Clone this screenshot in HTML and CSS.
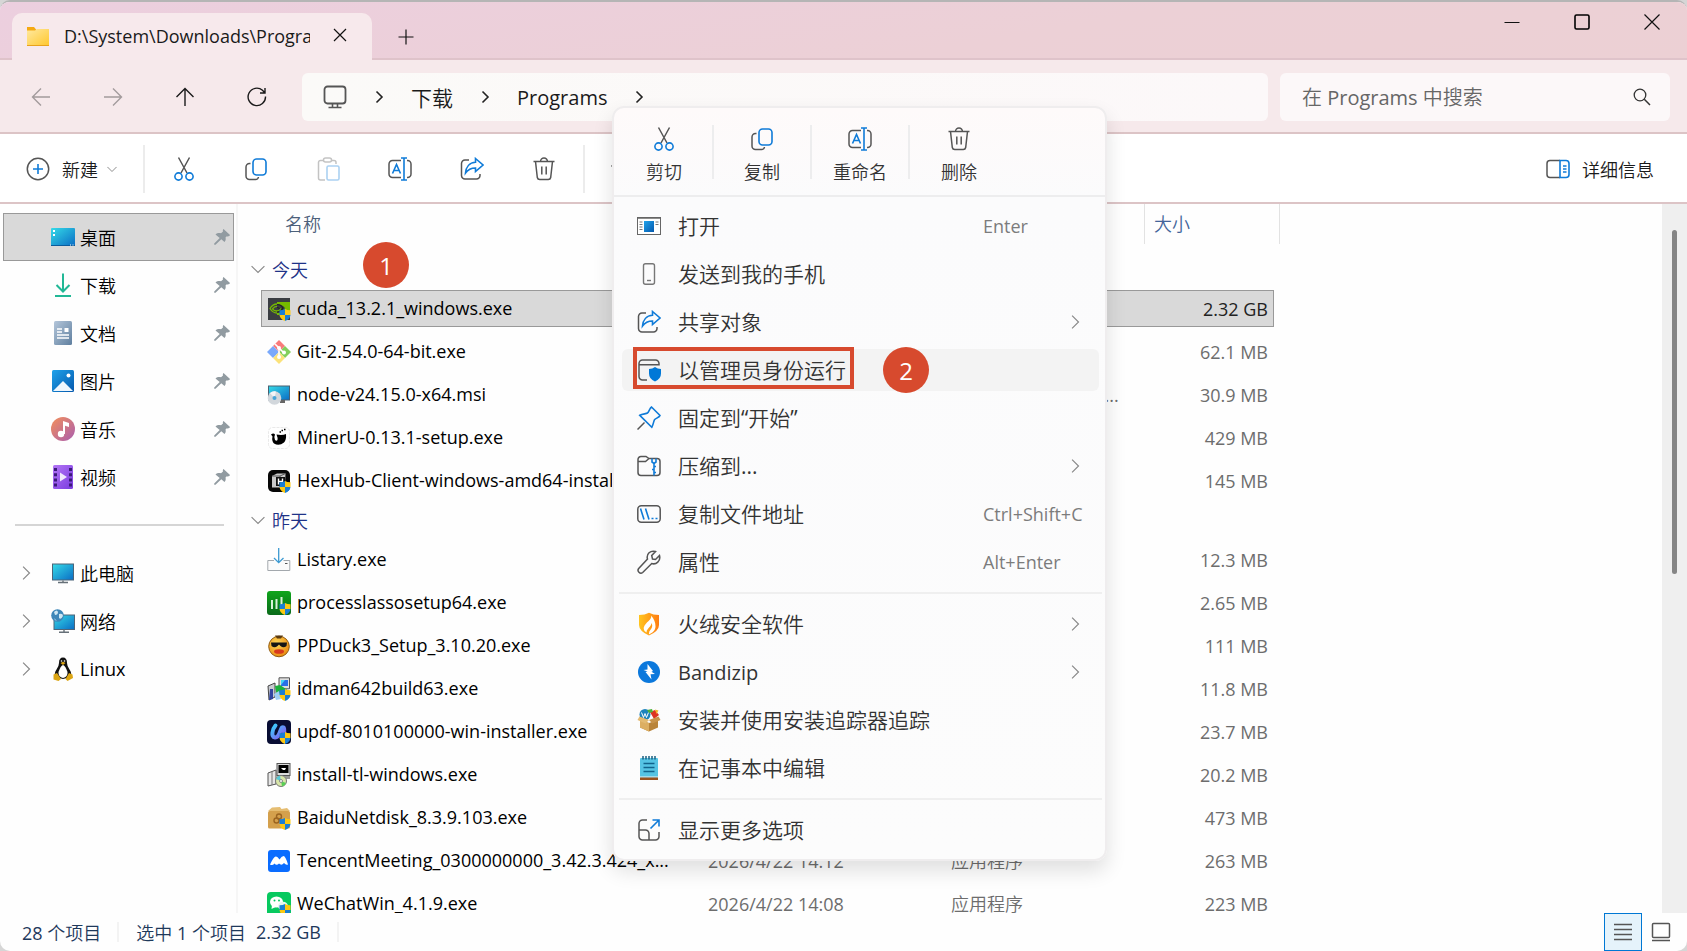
FILE: index.html
```html
<!DOCTYPE html>
<html lang="zh-CN">
<head>
    <meta charset="UTF-8">
    <meta name="viewport" content="width=device-width, initial-scale=1.0">
    <title>Programs</title>
    <link rel="stylesheet" href="styles.css">
</head>
<body>
    <svg class="sprite" width="0" height="0" aria-hidden="true">
        <defs>
            <linearGradient id="g-screen" x1="0" y1="0" x2="1" y2="1">
                <stop offset="0" stop-color="#35dbe8"/>
                <stop offset="1" stop-color="#0a6cc4"/>
            </linearGradient>
            <linearGradient id="g-folder" x1="0" y1="0" x2="1" y2="1">
                <stop offset="0" stop-color="#ffe9a0"/>
                <stop offset="1" stop-color="#ffc830"/>
            </linearGradient>
            <linearGradient id="g-doc" x1="0" y1="0" x2="1" y2="1">
                <stop offset="0" stop-color="#b4c6da"/>
                <stop offset="1" stop-color="#5f7f9f"/>
            </linearGradient>
            <linearGradient id="g-pic" x1="0" y1="0" x2="1" y2="1">
                <stop offset="0" stop-color="#1fa2ea"/>
                <stop offset="1" stop-color="#0558ad"/>
            </linearGradient>
            <linearGradient id="g-music" x1="0" y1="0" x2="1" y2="1">
                <stop offset="0" stop-color="#f4905a"/>
                <stop offset="1" stop-color="#a95db0"/>
            </linearGradient>
            <linearGradient id="g-video" x1="0" y1="0" x2="1" y2="1">
                <stop offset="0" stop-color="#b376f5"/>
                <stop offset="1" stop-color="#7a3be0"/>
            </linearGradient>
            <linearGradient id="g-lasso" x1="0" y1="0" x2="0" y2="1">
                <stop offset="0" stop-color="#0fa51c"/>
                <stop offset="1" stop-color="#0a6a1a"/>
            </linearGradient>
            <linearGradient id="g-fire" x1="0" y1="0" x2="1" y2="0">
                <stop offset="0" stop-color="#ffc51f"/>
                <stop offset="1" stop-color="#ff7d12"/>
            </linearGradient>
            <linearGradient id="g-updf" x1="0" y1="0" x2="1" y2="1">
                <stop offset="0" stop-color="#3ad0ff"/>
                <stop offset="1" stop-color="#8a54f0"/>
            </linearGradient>
            <radialGradient id="g-duck" cx="0.4" cy="0.35" r="0.7">
                <stop offset="0" stop-color="#ffd95a"/>
                <stop offset="1" stop-color="#e8860c"/>
            </radialGradient>
        </defs>

        <!-- line icons -->
        <symbol id="i-cut" viewBox="0 0 24 24">
            <path class="s-ink" d="M6.5 0.5 15 16M17.500 0.500 9 16"/>
            <circle class="s-blue" cx="6.500" cy="19.500" r="3.600"/>
            <circle class="s-blue" cx="17.500" cy="19.500" r="3.600"/>
        </symbol>
        <symbol id="i-copy" viewBox="0 0 24 24">
            <path class="s-ink" d="M6.500 6.500H5.500a3.500 3.500 0 0 0-3.500 3.500v9a3.500 3.500 0 0 0 3.500 3.500h6a3 3 0 0 0 3-2.500"/>
            <rect class="s-blue" x="9" y="2" width="13" height="16" rx="3.500"/>
        </symbol>
        <symbol id="i-paste" viewBox="0 0 24 24">
            <g opacity="0.35">
                <path class="s-ink" d="M7.500 3.500H4.500a2 2 0 0 0-2 2V21a2 2 0 0 0 2 2H9M15.500 3.500h2.500a2 2 0 0 1 2 2V7"/>
                <rect class="s-ink" x="7.500" y="1" width="8" height="4" rx="2"/>
                <rect class="s-blue" x="11" y="9" width="12" height="14" rx="1.500"/>
            </g>
        </symbol>
        <symbol id="i-rename" viewBox="0 0 24 24">
            <path class="s-ink" d="M13 3.500H4.500a3.500 3.500 0 0 0-3.500 3.500v10a3.500 3.500 0 0 0 3.500 3.500H13M19 3.500h.5A3.500 3.500 0 0 1 23 7v10a3.500 3.500 0 0 1-3.500 3.500H19"/>
            <path class="s-blue" d="M4.500 16.500 8.500 7.500l4 9M6 13.500h5M16 1v22M13 1h6M13 23h6"/>
        </symbol>
        <symbol id="i-share" viewBox="0 0 24 24">
            <path class="s-ink" d="M9 3H5A3.500 3.500 0 0 0 1.500 6.500v12A3.500 3.500 0 0 0 5 22h11.500a3.500 3.500 0 0 0 3.500-3.500V17"/>
            <path class="s-blue" d="M15.500 1.500 23 8l-7.500 6.500V11C11 11 8 12.500 5.500 16 6 10 9.500 5.500 15.500 5.200z"/>
        </symbol>
        <symbol id="i-delete" viewBox="0 0 24 24">
            <path class="s-ink" d="M1.500 4.500h21M8.500 4.500a3.500 3.500 0 0 1 7 0M3.500 4.500l1.800 16a2.500 2.500 0 0 0 2.500 2h8.400a2.500 2.500 0 0 0 2.500-2l1.800-16M9.800 9.500v8M14.200 9.500v8"/>
        </symbol>
        <symbol id="i-sort" viewBox="0 0 24 24">
            <path class="s-ink" d="M7 20V5M2.500 9.500 7 5l4.500 4.500M17 4v17M13 17l4 4 4-4"/>
        </symbol>
        <symbol id="i-new" viewBox="0 0 24 24">
            <circle class="s-ink" cx="12" cy="12" r="10.700"/>
            <path class="s-blue" d="M12 7v10M7 12h10"/>
        </symbol>
        <symbol id="i-details" viewBox="0 0 24 24">
            <path class="s-ink" d="M14 3.500H4a3 3 0 0 0-3 3v11a3 3 0 0 0 3 3h10"/>
            <path class="s-blue" d="M14 3.500h6a3 3 0 0 1 3 3v11a3 3 0 0 1-3 3h-6zM17 9h3.500M17 12h3.500M17 15h3.500"/>
        </symbol>
        <symbol id="i-chev" viewBox="0 0 12 12">
            <path d="M3.500 0.500 9 6l-5.500 5.500" fill="none" stroke="currentColor"/>
        </symbol>
        <symbol id="i-down" viewBox="0 0 12 12">
            <path d="M0.500 3.500 6 9l5.500-5.500" fill="none" stroke="currentColor"/>
        </symbol>
        <symbol id="i-pin" viewBox="0 0 16 16">
            <path fill="#919ba1" d="M9.500 0 16 6c-.8 1.500-2 1.600-3.200 1.200L11.500 8.500c.5 1.800.2 3.300-1 4.500L7.300 10.200 1.500 15.800.2 15.800V14.500L5.700 9 1.500 5.500C3 4 5 3.800 7 4.200L9 2.600C8.700 1.500 8.800.8 9.500 0z"/>
        </symbol>
        <symbol id="i-shield" viewBox="0 0 24 24">
            <path fill="#1a7fd4" d="M12.500 13.300Q16 13.300 18 12v6h-5.500zM18 18h5.500q-.5 4.200-5.500 6z"/>
            <path fill="#fcc812" d="M18 12q2 1.300 5.500 1.300V18H18zM12.500 18H18v6q-5-1.800-5.500-6z"/>
        </symbol>
        <symbol id="i-open" viewBox="0 0 24 24">
            <rect x="0.500" y="3.500" width="23" height="17" fill="#fff" stroke="#666"/>
            <path d="M0 4h24" stroke="#666" stroke-width="1.500"/>
            <rect x="7" y="7" width="10" height="11" fill="url(#g-pic)"/>
            <path d="M2.500 8h3M2.500 10.500h3M2.500 13h3M2.500 15.500h3M18.500 8h3M18.500 10.500h3" stroke="#777"/>
        </symbol>
        <symbol id="i-phone" viewBox="0 0 24 24">
            <rect x="6.500" y="1.800" width="11" height="20.400" rx="2" fill="none" stroke="#777" stroke-width="1.400"/>
            <path d="M10 18.500h4" stroke="#777" stroke-width="1.400"/>
        </symbol>
        <symbol id="i-admin" viewBox="0 0 24 24">
            <path class="s-ink" d="M10 22H5.500A3.500 3.500 0 0 1 2 18.500v-13A3.500 3.500 0 0 1 5.500 2h13A3.500 3.500 0 0 1 22 5.500V7.500M2 6.800h20"/>
            <path fill="#0078d7" d="M18 9q2.500 2 6 2v4.500q0 5.500-6 8-6-2.500-6-8V11q3.500 0 6-2z"/>
        </symbol>
        <symbol id="i-pinstart" viewBox="0 0 24 24">
            <path class="s-ink" d="M7.500 16.500 0.500 23.500"/>
            <path class="s-blue" d="M14.500 1 23 9.500c-.3 1.500-4.500 3-5.500 4.200-.8 1-1 4.800-2.700 7.500L2.800 9.300C5.500 7.700 9 8 10.500 7c1.500-1.200 2.500-5.500 4-6z"/>
        </symbol>
        <symbol id="i-zip" viewBox="0 0 24 24">
            <path class="s-ink" d="M1 7V5.500A3 3 0 0 1 4 2.500h5L12 4.500h8a3 3 0 0 1 3 3v11a3 3 0 0 1-3 3H4a3 3 0 0 1-3-3zM1 7.500h7.500L12 4.500"/>
            <path class="s-blue" d="M15 4.500v3.500l2 1.500 2-1.500V4.500M17 9.500v12M17 12.500h2M15 15.500h2M17 18.500h2"/>
        </symbol>
        <symbol id="i-path" viewBox="0 0 24 24">
            <rect class="s-ink" x="0.800" y="3.800" width="22.400" height="16.400" rx="3.500"/>
            <path class="s-blue" d="M3.500 6.500l3.500 11M8.500 6.500l3.500 11M14.500 16.500h2M18.500 16.500h2"/>
        </symbol>
        <symbol id="i-wrench" viewBox="0 0 24 24">
            <path class="s-ink" d="M18.500 1.500c-5-1.500-9.500 2.500-8 7.500L1.700 18.500c-2 2.500 1.300 6 4 4l9-9C19 15 24 11 22.500 5.500L18.500 9.500l-3-.5-.8-3.500z"/>
        </symbol>
        <symbol id="i-more" viewBox="0 0 24 24">
            <path class="s-ink" d="M10 2H5.500A3.500 3.500 0 0 0 2 5.500v13A3.500 3.500 0 0 0 5.500 22h13a3.500 3.500 0 0 0 3.500-3.500V14M2 12h6.500a3.500 3.500 0 0 1 3.500 3.500V22"/>
            <path class="s-blue" d="M13.500 10.500 22 2M15.500 2H22v6.500"/>
        </symbol>

        <!-- program icons -->
        <symbol id="i-huorong" viewBox="0 0 24 24">
            <path fill="url(#g-fire)" d="M2 3Q8 3 12 .8 16 3 22 3v10q0 6-10 10.500Q2 19 2 13z"/>
            <path fill="#fff" d="M14 3.500c1 3-2 5-4.500 7.500-3 3-3.500 5.500-2 8l2 1.500c0-3 2-4 3.500-6 1-1.200 1.500-2.400 1.300-3.500 2.200 3 0 6-2 8.500l-.5 3c4-1.500 6.700-4.500 6.700-8C18.500 10 17 7 14 3.500z"/>
        </symbol>
        <symbol id="i-bandizip" viewBox="0 0 24 24">
            <circle cx="12" cy="12" r="11" fill="#0b78dc"/>
            <path fill="#fff" d="M10.500 4 16 11l-1.500.8L18 14l-4.500.3 1 5.200-6-7.500 2-.5L6.500 10l4-.5z"/>
        </symbol>
        <symbol id="i-box" viewBox="0 0 24 24">
            <circle cx="8" cy="6.500" r="5.500" fill="#1d83bd"/>
            <path d="M4.500 4.500l2 5 1.500-4 1.500 4 2-5" fill="none" stroke="#fff"/>
            <path fill="#dd3322" d="M13 4l5-2 4 5-5 4z"/>
            <path fill="#4db13c" d="M10 2 15 1l1 3-4 1z"/>
            <path fill="#f5b32a" d="M18 1.500l3.500 1-2 3.500z"/>
            <path fill="#b9843a" d="M3 12l9 3 9-3v7.500l-9 4-9-4z"/>
            <path fill="#dcae62" d="M3 12l9 3v8.500l-9-4z"/>
            <path fill="#e3ba72" d="M2.500 8.500 0.500 12l8 3.500L12 12z"/>
            <path fill="#c8934a" d="M21.500 8.500l2 3.500-8 3.500L12 12z"/>
        </symbol>
        <symbol id="i-notepad" viewBox="0 0 24 24">
            <rect x="3" y="2" width="18" height="20" rx="1" fill="#56c4e4"/>
            <path d="M3 20.500h18v1H3z" fill="#f1f1f1"/>
            <path d="M3 21.500h18V24H3z" fill="#9a5320"/>
            <path d="M6 0v3.500M9 0v3.500M12 0v3.500M15 0v3.500M18 0v3.500" stroke="#1a5f80" stroke-width="1.500"/>
            <path d="M6.500 7.500h11M6.500 11.500h11M6.500 15.500h11" stroke="#12648c" stroke-width="1.600"/>
        </symbol>
        <symbol id="i-nvidia" viewBox="0 0 24 24">
            <rect x="1" y="1" width="22" height="22" fill="#3a3d42"/>
            <path fill="#76b900" d="M10 5h13v13H10v-2c4 0 6-2 8-5-2-2.500-5-4-8-4z"/>
            <path fill="none" stroke="#76b900" stroke-width="1.300" d="M10 7c-3 0-5.500 2-7 4.500C4.500 14 7 16 10 16M10 9.300c-2 0-3.500 1-4.500 2.500 1 1.500 2.500 2.300 4.500 2.200 2 0 3-1 4-2.500"/>
            <path fill="none" stroke="#222" stroke-width="1.200" d="M10 7.500c3 0 5 1.500 6 3.500-1.500 2.500-3.500 4-6 4M10 10.500q2 0 2.500 1.500"/>
            <use href="#i-shield"/>
        </symbol>
        <symbol id="i-git" viewBox="0 0 24 24">
            <path fill="#f97b7b" d="M12 0l6 6-6 6-6-6z"/>
            <path fill="#7aa9fb" d="M6 6l6 6-6 6-6-6z"/>
            <path fill="#82cf5c" d="M18 6l6 6-6 6-6-6z"/>
            <path fill="#fbe27a" d="M12 12l6 6-6 6-6-6z"/>
            <path d="M8 4l4 4v10M12 8l5 5" stroke="#fff" stroke-width="1.600" fill="none"/>
            <circle cx="12" cy="8" r="2" fill="#fff"/>
            <circle cx="12" cy="17" r="2" fill="#fff"/>
            <circle cx="17" cy="12.500" r="2" fill="#fff"/>
        </symbol>
        <symbol id="i-msi" viewBox="0 0 24 24">
            <rect x="1.500" y="3" width="21" height="14" fill="url(#g-screen)" stroke="#4a6070"/>
            <path d="M13 17v3h5v-3" fill="#666"/>
            <circle cx="7.500" cy="15" r="6.800" fill="#d2d7dc"/>
            <path d="M7.500 15 3 9.900A6.800 6.800 0 0 1 9 8.400z" fill="#f3f5f7"/>
            <circle cx="7.500" cy="15" r="2" fill="#4aa5d8"/>
        </symbol>
        <symbol id="i-mineru" viewBox="0 0 24 24">
            <rect x="1.500" y="1.500" width="21" height="21" rx="4" fill="#fff" stroke="#e9e9e9" stroke-dasharray="3 1"/>
            <path d="M4 8.500q2.500-2 4 0-1.500 3 0 5.500 1.500 1.500 2.500 0 .5-2-1-5.500 6 1 9.500-.5.500 6-2 8.500Q12 20.500 7 17.500 4.500 15 5.500 10.500z" fill="#000"/>
            <path d="M12.500 6h1.500M14.500 4.500h1.500M17 3.500h1.500" stroke="#000" stroke-width="1.500"/>
        </symbol>
        <symbol id="i-hexhub" viewBox="0 0 24 24">
            <rect x="1" y="1" width="22" height="22" rx="5" fill="#070707"/>
            <path d="M5 7l5-2.500h8.500L18 16l-5 2.500H5z" fill="#c9c9c9"/>
            <path d="M5 7h8v11M13 7l5.500-2.500" stroke="#555" fill="none"/>
            <rect x="9" y="8" width="9" height="9" fill="#111"/>
            <path d="M11.500 9.500v6M15.500 9.500v6M11.500 12.500h4" stroke="#fff" stroke-width="1.400"/>
            <use href="#i-shield"/>
        </symbol>
        <symbol id="i-listary" viewBox="0 0 24 24">
            <path d="M7 12.500H.8v10h22v-10H16.500" fill="#fbfbfb" stroke="#a3a8ad"/>
            <path d="M18 15.500h2.500" stroke="#555"/>
            <path d="M11.700 0v14.500M7 10l4.700 4.700L16.500 10" stroke="#3d9ad2" stroke-width="1.300" fill="none"/>
        </symbol>
        <symbol id="i-lasso" viewBox="0 0 24 24">
            <rect width="24" height="24" rx="3" fill="url(#g-lasso)"/>
            <path d="M5 9v9M9.500 8v10M14.500 6v12" stroke="#d9f2d9" stroke-width="2"/>
            <use href="#i-shield"/>
        </symbol>
        <symbol id="i-duck" viewBox="0 0 24 24">
            <circle cx="12" cy="12.500" r="10.300" fill="url(#g-duck)" stroke="#8f5a10"/>
            <path d="M8 1.500h8l-2 3H10z" fill="#5a3a10"/>
            <path d="M4 8.500h16l-.5 3.500q-3 2.500-6 0L12 10.500 10.500 12q-3 2.500-6 0z" fill="#151515"/>
            <ellipse cx="12" cy="17.500" rx="5" ry="2.300" fill="#d8391c"/>
        </symbol>
        <symbol id="i-idman" viewBox="0 0 24 24">
            <path fill="#dedede" stroke="#555" d="M12 .8h10.500v11H12z"/>
            <path fill="#2a6fe6" d="M14 3h7v6h-7z"/>
            <path fill="#42d7f2" d="M14 3h4l-4 5z"/>
            <path fill="#c9cbd0" stroke="#444" d="M1 9l7-3v14l-6 3z"/>
            <path fill="#31459f" d="M3 12h3v10l-4 1z"/>
            <path fill="#1bb13b" d="M8 9l5-1 9 6-8 1-4 5z"/>
            <path fill="#9fd0f5" d="M7 17l5-3 2 8-5 1z"/>
            <use href="#i-shield"/>
        </symbol>
        <symbol id="i-updf" viewBox="0 0 24 24">
            <rect width="24" height="24" rx="4" fill="#080d33"/>
            <path d="M8.500 5.500C5.500 9 3.500 17 8 17.500c4.500.5 5-8 7-10 2.500-1.500 2.500 3 2 7" fill="none" stroke="url(#g-updf)" stroke-width="4" stroke-linecap="round"/>
            <use href="#i-shield"/>
        </symbol>
        <symbol id="i-texlive" viewBox="0 0 24 24">
            <rect x="10" y=".5" width="13" height="12" fill="#dcdcdc" stroke="#555"/>
            <rect x="11.500" y="2" width="10" height="8" fill="#000"/>
            <path d="M14 5h5l-1 2h-2z" fill="#fff"/>
            <path d="M1 10l8-3v14l-8 2z" fill="#e6e6e6" stroke="#555"/>
            <path d="M5 9v13" stroke="#777"/>
            <path d="M17 13h6v3h-4z" fill="#999"/>
            <circle cx="14" cy="18" r="5.500" fill="#d8e6a8" stroke="#777"/>
            <path d="M14 18l-5-2a5.500 5.500 0 0 1 4-3.500z" fill="#55c8d8"/>
            <path d="M14 18l5 2a5.500 5.500 0 0 1-4 3.500z" fill="#59cf55"/>
            <circle cx="14" cy="18" r="1.500" fill="#fff" stroke="#888"/>
        </symbol>
        <symbol id="i-baidu" viewBox="0 0 24 24">
            <path fill="#e5bd72" d="M1 5l4-3.500L13 1l1.500 2L20 2l3 3z"/>
            <rect x="1" y="5" width="22" height="17.500" rx="1.500" fill="#d4a04c"/>
            <circle cx="12" cy="10.500" r="2.500" fill="none" stroke="#9b6420" stroke-width="1.400"/>
            <circle cx="9.500" cy="14.500" r="2.500" fill="none" stroke="#9b6420" stroke-width="1.400"/>
            <path d="M11.500 13l3 3.500" stroke="#9b6420" stroke-width="1.400"/>
            <use href="#i-shield"/>
        </symbol>
        <symbol id="i-tencent" viewBox="0 0 24 24">
            <rect x="1" y="1" width="22" height="22" rx="3" fill="#0a6cff"/>
            <path d="M3 15.500q4-8.500 6-8 1.500 0 3.500 3 2-3.500 4-3.500 2 0 4.500 8.500-2 1-4-1.500-2.500 3-5 .5-2.500 2.500-4.500 0-2 2.500-4.500 1z" fill="#fff"/>
        </symbol>
        <symbol id="i-wechat" viewBox="0 0 24 24">
            <rect width="24" height="24" rx="4" fill="#07c95f"/>
            <ellipse cx="9.500" cy="10" rx="6.500" ry="5.500" fill="#fff"/>
            <path d="M5 13l-.5 4 4-2z" fill="#fff"/>
            <ellipse cx="16" cy="14" rx="5" ry="4.300" fill="#e6f7ec"/>
            <circle cx="7.500" cy="8.500" r="1" fill="#07c95f"/>
            <circle cx="12" cy="8.500" r="1" fill="#07c95f"/>
            <use href="#i-shield"/>
        </symbol>
    </svg>

    <div class="window">
        <header class="titlebar">
            <div class="tab">
                <svg class="icon" viewBox="0 0 24 24">
                    <path fill="#f5a912" d="M1 3h7l2 2.500V8H1z"/>
                    <path fill="url(#g-folder)" d="M1 6.500h8l2-1.500h12v16H1z"/>
                    <path stroke="#e8a21c" d="M1 21.500h22"/>
                </svg>
                <span class="tab-title">D:\System\Downloads\Programs</span>
                <button class="tab-close" aria-label="关闭标签页">
                    <svg width="14" height="14" viewBox="0 0 14 14"><path class="s-black" d="M1 1l12 12M13 1 1 13"/></svg>
                </button>
            </div>
            <button class="tab-add" aria-label="新标签页">
                <svg width="16" height="16" viewBox="0 0 16 16"><path class="s-black" d="M8 .5v15M.5 8h15"/></svg>
            </button>
            <div class="window-controls">
                <button aria-label="最小化"><svg width="16" height="16" viewBox="0 0 16 16"><path class="s-black" d="M.5 8.500h15"/></svg></button>
                <button aria-label="最大化"><svg width="16" height="16" viewBox="0 0 16 16"><rect x="1" y="1" width="14" height="14" rx="1.500" fill="none" stroke="#000" stroke-width="1.600"/></svg></button>
                <button aria-label="关闭"><svg width="16" height="16" viewBox="0 0 16 16"><path class="s-black" d="M.5.5l15 15M15.500.5l-15 15"/></svg></button>
            </div>
        </header>

        <nav class="navbar">
            <button class="nav-btn" aria-label="后退" disabled><svg class="nav-icon" viewBox="0 0 20 20"><path d="M19 10H1.500M10 1.500 1.500 10l8.500 8.500"/></svg></button>
            <button class="nav-btn" aria-label="前进" disabled><svg class="nav-icon" viewBox="0 0 20 20"><path d="M1 10h17.500M10 1.500l8.500 8.500-8.500 8.500"/></svg></button>
            <button class="nav-btn" aria-label="向上"><svg class="nav-icon" viewBox="0 0 20 20"><path d="M10 19V1.500M1.500 10 10 1.500l8.500 8.500"/></svg></button>
            <button class="nav-btn" aria-label="刷新"><svg class="nav-icon" viewBox="0 0 20 20"><path d="M18.500 9.500a8.700 8.700 0 1 1-3-6.200l2 2.200M18 1v5h-5"/></svg></button>
            <div class="address">
                <svg class="icon" viewBox="0 0 24 24">
                    <rect x="1.500" y="1.500" width="21" height="17" rx="3" fill="none" stroke="#555" stroke-width="1.800"/>
                    <path d="M5.500 22.500h13M9.500 18.500v4M14.500 18.500v4" stroke="#555" stroke-width="1.600"/>
                </svg>
                <svg class="crumb-chev" viewBox="0 0 24 24"><path d="M9.500 6.500 15 12l-5.500 5.500"/></svg>
                <a class="crumb-zh" href="#downloads">下载</a>
                <svg class="crumb-chev" viewBox="0 0 24 24"><path d="M9.500 6.500 15 12l-5.500 5.500"/></svg>
                <a href="#programs">Programs</a>
                <svg class="crumb-chev" viewBox="0 0 24 24"><path d="M9.500 6.500 15 12l-5.500 5.500"/></svg>
            </div>
            <div class="search">
                <input type="text" aria-label="搜索" placeholder="在 Programs 中搜索">
                <svg width="18" height="18" viewBox="0 0 18 18"><circle cx="7" cy="7" r="5.800" fill="none" stroke="#333" stroke-width="1.300"/><path d="M11.300 11.300l5.700 5.700" stroke="#333" stroke-width="1.500"/></svg>
            </div>
        </nav>

        <div class="commandbar">
            <button class="cmd-new">
                <svg class="icon"><use href="#i-new"/></svg>
                <span>新建</span>
                <svg class="tiny"><use href="#i-down"/></svg>
            </button>
            <span class="cmd-sep"></span>
            <button class="cmd-btn" aria-label="剪切"><svg class="icon"><use href="#i-cut"/></svg></button>
            <button class="cmd-btn" aria-label="复制"><svg class="icon"><use href="#i-copy"/></svg></button>
            <button class="cmd-btn" aria-label="粘贴" disabled><svg class="icon"><use href="#i-paste"/></svg></button>
            <button class="cmd-btn" aria-label="重命名"><svg class="icon"><use href="#i-rename"/></svg></button>
            <button class="cmd-btn" aria-label="共享"><svg class="icon"><use href="#i-share"/></svg></button>
            <button class="cmd-btn" aria-label="删除"><svg class="icon"><use href="#i-delete"/></svg></button>
            <span class="cmd-sep"></span>
            <button class="cmd-sort" aria-label="排序"><svg class="icon"><use href="#i-sort"/></svg></button>
            <button class="cmd-details">
                <svg class="icon"><use href="#i-details"/></svg>
                <span>详细信息</span>
            </button>
        </div>

        <div class="body">
            <aside class="sidebar">
                <a class="side-item selected" href="#desktop">
                    <svg class="icon" viewBox="0 0 24 24"><rect y="3" width="24" height="18" rx="1" fill="url(#g-screen)"/><path d="M2 6h2M2 10h2" stroke="#fff" stroke-width="2"/><path d="M0 20.500h24" stroke="#0a5c9c"/><path d="M19 20h1M21.500 20h1" stroke="#fff"/></svg>
                    <span>桌面</span><svg class="pin"><use href="#i-pin"/></svg>
                </a>
                <a class="side-item" href="#downloads">
                    <svg class="icon" viewBox="0 0 24 24"><path d="M12 .5v18M5.500 12l6.500 6.500 6.500-6.500M4 23h16" fill="none" stroke="#21b896" stroke-width="2"/></svg>
                    <span>下载</span><svg class="pin"><use href="#i-pin"/></svg>
                </a>
                <a class="side-item" href="#documents">
                    <svg class="icon" viewBox="0 0 24 24"><rect x="3" width="18" height="24" rx="1.500" fill="url(#g-doc)"/><path d="M6 8h5M6 11h5M6 14h12M6 17h12" stroke="#fff" stroke-width="1.300"/><rect x="13.500" y="7" width="4" height="4" fill="#fff"/></svg>
                    <span>文档</span><svg class="pin"><use href="#i-pin"/></svg>
                </a>
                <a class="side-item" href="#pictures">
                    <svg class="icon" viewBox="0 0 24 24"><rect x="1" y="1" width="22" height="22" rx="1.500" fill="url(#g-pic)"/><path d="M2 22 12 12l10 10z" fill="#eef6fd"/><circle cx="17.500" cy="6.500" r="2" fill="#fff"/></svg>
                    <span>图片</span><svg class="pin"><use href="#i-pin"/></svg>
                </a>
                <a class="side-item" href="#music">
                    <svg class="icon" viewBox="0 0 24 24"><circle cx="12" cy="12" r="12" fill="url(#g-music)"/><circle cx="10" cy="17" r="3.200" fill="#fff"/><path d="M12 4l6 2v4l-4-1.200V17H12z" fill="#fff"/></svg>
                    <span>音乐</span><svg class="pin"><use href="#i-pin"/></svg>
                </a>
                <a class="side-item" href="#videos">
                    <svg class="icon" viewBox="0 0 24 24"><rect x="2" width="20" height="24" rx="1.500" fill="url(#g-video)"/><path d="M4.500 3v19M19.500 3v19" stroke="#3b1a7a" stroke-width="3" stroke-dasharray="3 2.200"/><path d="M9 7.500l7 4.500-7 4.500z" fill="#f0e8fc"/></svg>
                    <span>视频</span><svg class="pin"><use href="#i-pin"/></svg>
                </a>
                <hr class="side-rule">
                <a class="side-item" href="#computer">
                    <svg class="side-chev"><use href="#i-chev"/></svg>
                    <svg class="icon" viewBox="0 0 24 24"><rect x="1.500" y="3" width="21" height="16" fill="url(#g-screen)" stroke="#4c6478"/><path d="M12 19.500v2M7 21.500h10" stroke="#667078" stroke-width="1.400"/></svg>
                    <span>此电脑</span>
                </a>
                <a class="side-item" href="#network">
                    <svg class="side-chev"><use href="#i-chev"/></svg>
                    <svg class="icon" viewBox="0 0 24 24"><rect x="3" y="6" width="20.500" height="14.500" fill="url(#g-screen)" stroke="#4c6478"/><path d="M13 20.500v2.500M8 23.200h10" stroke="#667078" stroke-width="1.400"/><circle cx="6.500" cy="6.500" r="6.300" fill="#3d86b8"/><path d="M3 3q3-3 4 0 0 3-3 3zM8 5q4-1 4 2-2 4-4 2zM3 9l3 3-2-1z" fill="#cde6f2"/></svg>
                    <span>网络</span>
                </a>
                <a class="side-item" href="#linux">
                    <svg class="side-chev"><use href="#i-chev"/></svg>
                    <svg class="icon" viewBox="0 0 24 24"><path d="M8 6q0-5.500 4-5.500T16 6q0 3 2.500 6.500T20 20l-8 2-8-2q-1-4 1.500-7.500T8 6z" fill="#111"/><path d="M12 8q2.500 1 4.500 7 .5 5-4.500 6-5-1-4.500-6Q9.500 9 12 8z" fill="#fff"/><path d="M9.500 6 12 4.800 14.500 6 12 8zM2.500 17.500 6 16l4 6-2.500 2-5-1.500zM21.500 17.500 18 16l-3.500 6 2 2 5.500-3z" fill="#dba514"/><circle cx="10.500" cy="4" r=".8" fill="#fff"/><circle cx="13.500" cy="4" r=".8" fill="#fff"/></svg>
                    <span>Linux</span>
                </a>
            </aside>

            <main class="files">
                <table class="file-table">
                    <colgroup>
                        <col class="c-gutter"><col class="c-name"><col class="c-date"><col class="c-type"><col class="c-size"><col class="c-tail">
                    </colgroup>
                    <thead>
                        <tr>
                            <th></th>
                            <th><div class="head head-name">名称</div></th>
                            <th><div class="head"></div></th>
                            <th><div class="head"></div></th>
                            <th colspan="2"><div class="head head-last">大小</div></th>
                        </tr>
                    </thead>
                    <tbody>
                        <tr class="group"><th colspan="6"><div class="group-label"><svg class="group-chev"><use href="#i-down"/></svg>今天<span class="callout callout-one">1</span></div></th></tr>
                        <tr class="selected"><td></td><td><div class="cell name"><svg class="icon"><use href="#i-nvidia"/></svg><span>cuda_13.2.1_windows.exe</span></div></td><td><div class="cell"></div></td><td><div class="cell type"></div></td><td><div class="cell size">2.32 GB</div></td><td></td></tr>
                        <tr><td></td><td><div class="cell name"><svg class="icon"><use href="#i-git"/></svg><span>Git-2.54.0-64-bit.exe</span></div></td><td><div class="cell"></div></td><td><div class="cell type"></div></td><td><div class="cell size">62.1 MB</div></td><td></td></tr>
                        <tr><td></td><td><div class="cell name"><svg class="icon"><use href="#i-msi"/></svg><span>node-v24.15.0-x64.msi</span></div></td><td><div class="cell"></div></td><td><div class="cell type">Windows Installer ...</div></td><td><div class="cell size">30.9 MB</div></td><td></td></tr>
                        <tr><td></td><td><div class="cell name"><svg class="icon"><use href="#i-mineru"/></svg><span>MinerU-0.13.1-setup.exe</span></div></td><td><div class="cell"></div></td><td><div class="cell type"></div></td><td><div class="cell size">429 MB</div></td><td></td></tr>
                        <tr><td></td><td><div class="cell name"><svg class="icon"><use href="#i-hexhub"/></svg><span>HexHub-Client-windows-amd64-installer.exe</span></div></td><td><div class="cell"></div></td><td><div class="cell type"></div></td><td><div class="cell size">145 MB</div></td><td></td></tr>
                    </tbody>
                    <tbody>
                        <tr class="group"><th colspan="6"><div class="group-label"><svg class="group-chev"><use href="#i-down"/></svg>昨天</div></th></tr>
                        <tr><td></td><td><div class="cell name"><svg class="icon"><use href="#i-listary"/></svg><span>Listary.exe</span></div></td><td><div class="cell"></div></td><td><div class="cell type"></div></td><td><div class="cell size">12.3 MB</div></td><td></td></tr>
                        <tr><td></td><td><div class="cell name"><svg class="icon"><use href="#i-lasso"/></svg><span>processlassosetup64.exe</span></div></td><td><div class="cell"></div></td><td><div class="cell type"></div></td><td><div class="cell size">2.65 MB</div></td><td></td></tr>
                        <tr><td></td><td><div class="cell name"><svg class="icon"><use href="#i-duck"/></svg><span>PPDuck3_Setup_3.10.20.exe</span></div></td><td><div class="cell"></div></td><td><div class="cell type"></div></td><td><div class="cell size">111 MB</div></td><td></td></tr>
                        <tr><td></td><td><div class="cell name"><svg class="icon"><use href="#i-idman"/></svg><span>idman642build63.exe</span></div></td><td><div class="cell"></div></td><td><div class="cell type"></div></td><td><div class="cell size">11.8 MB</div></td><td></td></tr>
                        <tr><td></td><td><div class="cell name"><svg class="icon"><use href="#i-updf"/></svg><span>updf-8010100000-win-installer.exe</span></div></td><td><div class="cell"></div></td><td><div class="cell type"></div></td><td><div class="cell size">23.7 MB</div></td><td></td></tr>
                        <tr><td></td><td><div class="cell name"><svg class="icon"><use href="#i-texlive"/></svg><span>install-tl-windows.exe</span></div></td><td><div class="cell"></div></td><td><div class="cell type"></div></td><td><div class="cell size">20.2 MB</div></td><td></td></tr>
                        <tr><td></td><td><div class="cell name"><svg class="icon"><use href="#i-baidu"/></svg><span>BaiduNetdisk_8.3.9.103.exe</span></div></td><td><div class="cell"></div></td><td><div class="cell type"></div></td><td><div class="cell size">473 MB</div></td><td></td></tr>
                        <tr><td></td><td><div class="cell name"><svg class="icon"><use href="#i-tencent"/></svg><span>TencentMeeting_0300000000_3.42.3.424_x...</span></div></td><td><div class="cell">2026/4/22 14:12</div></td><td><div class="cell type">应用程序</div></td><td><div class="cell size">263 MB</div></td><td></td></tr>
                        <tr><td></td><td><div class="cell name"><svg class="icon"><use href="#i-wechat"/></svg><span>WeChatWin_4.1.9.exe</span></div></td><td><div class="cell">2026/4/22 14:08</div></td><td><div class="cell type">应用程序</div></td><td><div class="cell size">223 MB</div></td><td></td></tr>
                    </tbody>
                </table>
            </main>
            <div class="scrollbar"><div class="thumb"></div></div>
        </div>

        <footer class="statusbar">
            <span class="status-part">28 个项目</span>
            <span class="status-part">选中 1 个项目 <span>2.32 GB</span></span>
            <div class="view-switch">
                <button class="active" aria-label="详细信息视图"><svg width="20" height="20" viewBox="0 0 20 20"><path class="s-ink" d="M1 2.500h18M1 7.500h18M1 12.500h18M1 17.500h18"/></svg></button>
                <button aria-label="大图标视图"><svg width="20" height="20" viewBox="0 0 20 20"><rect class="s-ink" x="1.500" y="1.500" width="17" height="14" rx="1"/><path class="s-ink" d="M1 18.500h18"/></svg></button>
            </div>
        </footer>
    </div>

    <div class="menu">
        <div class="menu-top">
            <button><svg class="icon"><use href="#i-cut"/></svg>剪切</button>
            <button><svg class="icon"><use href="#i-copy"/></svg>复制</button>
            <button><svg class="icon"><use href="#i-rename"/></svg>重命名</button>
            <button><svg class="icon"><use href="#i-delete"/></svg>删除</button>
        </div>
        <div class="menu-list">
            <button class="menu-item"><svg class="icon"><use href="#i-open"/></svg><span>打开</span><kbd>Enter</kbd></button>
            <button class="menu-item"><svg class="icon"><use href="#i-phone"/></svg><span>发送到我的手机</span></button>
            <button class="menu-item"><svg class="icon"><use href="#i-share"/></svg><span>共享对象</span><svg class="sub"><use href="#i-chev"/></svg></button>
            <button class="menu-item hover"><svg class="icon"><use href="#i-admin"/></svg><span>以管理员身份运行</span><i class="frame"></i><b class="callout callout-two">2</b></button>
            <button class="menu-item"><svg class="icon"><use href="#i-pinstart"/></svg><span>固定到“开始”</span></button>
            <button class="menu-item"><svg class="icon"><use href="#i-zip"/></svg><span>压缩到...</span><svg class="sub"><use href="#i-chev"/></svg></button>
            <button class="menu-item"><svg class="icon"><use href="#i-path"/></svg><span>复制文件地址</span><kbd>Ctrl+Shift+C</kbd></button>
            <button class="menu-item"><svg class="icon"><use href="#i-wrench"/></svg><span>属性</span><kbd>Alt+Enter</kbd></button>
            <hr>
            <button class="menu-item"><svg class="icon"><use href="#i-huorong"/></svg><span>火绒安全软件</span><svg class="sub"><use href="#i-chev"/></svg></button>
            <button class="menu-item"><svg class="icon"><use href="#i-bandizip"/></svg><span class="latin">Bandizip</span><svg class="sub"><use href="#i-chev"/></svg></button>
            <button class="menu-item"><svg class="icon"><use href="#i-box"/></svg><span>安装并使用安装追踪器追踪</span></button>
            <button class="menu-item"><svg class="icon"><use href="#i-notepad"/></svg><span>在记事本中编辑</span></button>
            <hr>
            <button class="menu-item"><svg class="icon"><use href="#i-more"/></svg><span>显示更多选项</span></button>
        </div>
    </div>
</body>
</html>
```

FILE: styles.css
```css
* {
    box-sizing: border-box;
}
body {
    margin: 0;
    height: 100vh;
    overflow: hidden;
    background-color: #d6d6d6;
    font-family: "Open Sans", "Noto Sans CJK SC DemiLight", "Noto Sans CJK SC", sans-serif;
    font-size: 18px;
    color: #1a1a1a;
}
button {
    display: flex;
    align-items: center;
    justify-content: center;
    border: 0;
    padding: 0;
    background: none;
    font: inherit;
    color: inherit;
}
a {
    color: inherit;
    text-decoration: none;
}
svg {
    display: block;
    flex: none;
}
.sprite {
    position: absolute;
}
.icon {
    width: 24px;
    height: 24px;
}
.s-ink {
    fill: none;
    stroke: #555;
    stroke-width: 1.5;
}
.s-blue {
    fill: none;
    stroke: #0f7bd8;
    stroke-width: 1.6;
}
.s-black {
    fill: none;
    stroke: #111;
    stroke-width: 1.2;
}

.window {
    display: flex;
    flex-direction: column;
    height: 100vh;
    border-top: 2px solid #b5b5b5;
    border-radius: 10px;
    overflow: hidden;
    background-color: #fefefe;
}

/* title bar */
.titlebar {
    display: flex;
    align-items: flex-end;
    height: 58px;
    padding-left: 12px;
    background: linear-gradient(170deg, #eccfdf 0%, #ecd0d6 60%, #ecd0d4 100%);
    box-shadow: inset 0 -2px #dfc3ca;
    flex: none;
}
.tab {
    display: flex;
    align-items: center;
    width: 360px;
    height: 47px;
    padding: 0 25px 2px 14px;
    border-radius: 10px 10px 0 0;
    background-color: #f7e9ec;
}
.tab-title {
    width: 246px;
    margin-left: 14px;
    overflow: hidden;
    white-space: nowrap;
}
.tab-close {
    margin-left: auto;
    padding-bottom: 2px;
}
.tab-add {
    width: 36px;
    height: 46px;
    margin-left: 16px;
}
.window-controls {
    display: flex;
    align-self: flex-start;
    margin-left: auto;
}
.window-controls button {
    width: 70px;
    height: 40px;
}

/* navigation */
.navbar {
    display: flex;
    align-items: center;
    height: 74px;
    padding: 2px 17px 0 5px;
    border-bottom: 2px solid #dcc4c6;
    background-color: #f6e9eb;
    flex: none;
}
.nav-btn {
    width: 72px;
    height: 48px;
}
.nav-icon {
    width: 20px;
    height: 20px;
    fill: none;
    stroke: #1a1a1a;
    stroke-width: 1.4;
}
.nav-btn:disabled .nav-icon {
    stroke: #a39b9c;
}
.address {
    display: flex;
    align-items: center;
    gap: 20px;
    flex: 1;
    height: 48px;
    margin-left: 9px;
    padding-left: 21px;
    border-radius: 6px;
    background: linear-gradient(90deg, #fbfaf8, #fcf8f9);
    font-size: 20px;
}
.crumb-zh {
    font-size: 21px;
}
.crumb-chev {
    width: 24px;
    height: 24px;
    fill: none;
    stroke: #222;
    stroke-width: 1.6;
}
.search {
    display: flex;
    align-items: center;
    width: 390px;
    height: 48px;
    margin-left: 12px;
    padding: 0 19px 0 22px;
    border-radius: 6px;
    background-color: #fcf8f9;
}
.search input {
    flex: 1;
    min-width: 0;
    padding: 0;
    border: 0;
    outline: 0;
    background: none;
    font: inherit;
    font-size: 20px;
}
.search input::placeholder {
    color: #666;
    opacity: 1;
}

/* command bar */
.commandbar {
    display: flex;
    align-items: center;
    height: 70px;
    padding: 2px 33px 0 26px;
    border-bottom: 2px solid #dcc4c6;
    background-color: #fff;
    flex: none;
}
.cmd-new {
    gap: 12px;
}
.tiny {
    width: 10px;
    height: 10px;
    color: #777;
    margin-left: -3px;
}
.cmd-sep {
    width: 2px;
    height: 48px;
    margin-right: 3px;
    background-color: #ececec;
}
.cmd-new + .cmd-sep {
    margin-left: 26px;
}
.cmd-btn {
    width: 72px;
    height: 48px;
}
.cmd-btn + .cmd-sep {
    margin-left: 3px;
}
.cmd-sort {
    width: 66px;
    height: 48px;
}
.cmd-details {
    gap: 12px;
    margin-left: auto;
}

/* body */
.body {
    display: flex;
    flex: 1;
    min-height: 0;
}
.sidebar {
    width: 238px;
    padding: 9px 2px 0 3px;
    border-right: 2px solid #f6f6f6;
    flex: none;
}
.side-item {
    display: flex;
    align-items: center;
    position: relative;
    height: 48px;
    padding: 0 3px 0 47px;
    border: 1px solid transparent;
    color: #000;
}
.side-item.selected {
    border-color: #999;
    background-color: #d9d9d9;
}
.side-item span {
    margin-left: 5px;
    padding-bottom: 1px;
}
.pin {
    width: 16px;
    height: 16px;
    margin-left: auto;
}
.side-chev {
    width: 14px;
    height: 14px;
    margin: 0 18px 0 -32px;
    color: #888;
}
.side-rule {
    height: 2px;
    margin: 23px 10px 23px 12px;
    border: 0;
    background-color: #d5d5d5;
}
.files {
    flex: 1;
    min-width: 0;
    padding-left: 9px;
    overflow: hidden;
}
.file-table {
    table-layout: fixed;
    width: 1033px;
    border-spacing: 0;
}
.c-gutter {
    width: 14px;
}
.c-name {
    width: 439px;
}
.c-date {
    width: 242px;
}
.c-type {
    width: 202px;
}
.c-size {
    width: 130px;
}
.c-tail {
    width: 6px;
}
.file-table th,
.file-table td {
    padding: 0;
    font-weight: normal;
    text-align: left;
}
.file-table td {
    padding: 3px 0;
}
.file-table thead th {
    height: 47px;
    vertical-align: top;
}
.head {
    height: 40px;
    padding-left: 9px;
    border-left: 1px solid #e2e2e2;
    line-height: 40px;
    color: #4c607a;
}
.head-name {
    padding-left: 24px;
    border-left: 0;
}
.head-last {
    border-right: 1px solid #e2e2e2;
    color: #43659a;
}
.group-label {
    display: flex;
    align-items: center;
    position: relative;
    height: 36px;
    padding-left: 4px;
    color: #1e3287;
}
.group-chev {
    width: 14px;
    height: 14px;
    margin-right: 7px;
    color: #888;
}
.cell {
    height: 37px;
    padding-left: 8px;
    line-height: 39px;
    color: #6d6d6d;
    white-space: nowrap;
    overflow: hidden;
    text-overflow: ellipsis;
}
.cell.name {
    display: flex;
    align-items: center;
    padding: 0 12px 0 6px;
    color: #000;
}
.cell.name span {
    margin-left: 6px;
}
.cell.type {
    padding: 0 10px 0 9px;
}
.cell.size {
    padding-right: 6px;
    text-align: right;
}
.selected .cell {
    border: solid #999;
    border-width: 1px 0;
    background-color: #d9d9d9;
    line-height: 37px;
    color: #222;
}
.selected .cell.name {
    padding-left: 5px;
    border-left-width: 1px;
    color: #000;
}
.selected .cell.size {
    padding-right: 5px;
    border-right-width: 1px;
}
.scrollbar {
    width: 25px;
    padding: 26px 10px;
    background-color: #efefef;
    flex: none;
}
.thumb {
    width: 5px;
    height: 344px;
    border-radius: 3px;
    background-color: #858585;
}

/* status bar */
.statusbar {
    display: flex;
    align-items: center;
    height: 38px;
    padding-left: 22px;
    color: #1e395b;
    flex: none;
}
.status-part {
    display: flex;
    align-items: center;
    gap: 10px;
    height: 20px;
    margin-right: 17px;
    padding-right: 16px;
    border-right: 2px solid #f3f3f3;
}
.view-switch {
    display: flex;
    margin-left: auto;
    padding-right: 8px;
}
.view-switch button {
    width: 37px;
    height: 38px;
}
.view-switch .active {
    width: 38px;
    border: 1px solid #0078d4;
    background-color: #e5f3fb;
}

/* context menu */
.menu {
    position: absolute;
    left: 612px;
    top: 106px;
    width: 495px;
    border: 2px solid #efedee;
    border-radius: 12px;
    background: linear-gradient(180deg, #fefafa 0, #fbfbfc 90px, #fcfcfc 100%);
    box-shadow: 0 10px 20px rgba(0, 0, 0, 0.12);
    color: #333;
}
.menu-top {
    display: flex;
    height: 89px;
    padding: 17px 0 0 2px;
    border-bottom: 2px solid #ededee;
}
.menu-top button {
    flex-direction: column;
    justify-content: flex-start;
    gap: 9px;
    width: 98px;
    height: 54px;
    padding-top: 2px;
    border-right: 2px solid #ededee;
    line-height: 24px;
}
.menu-top button:last-child {
    border-right: 0;
}
.menu-list {
    display: flex;
    flex-direction: column;
    gap: 6px;
    padding: 8px 3px 8px 5px;
}
.menu-list hr {
    height: 2px;
    width: 100%;
    margin: 3px 0;
    border: 0;
    background-color: #efefef;
}
.menu-item {
    justify-content: flex-start;
    position: relative;
    height: 42px;
    margin: 0 3px;
    padding: 0 17px 0 15px;
    border-radius: 6px;
    font-size: 21px;
}
.menu-item.hover {
    background-color: #f3f3f3;
}
.menu-item span {
    margin-left: 17px;
    padding-bottom: 2px;
}
.menu-item .latin {
    padding-bottom: 0;
    font-size: 20px;
}
.menu-item kbd {
    width: 99px;
    margin-left: auto;
    font-family: inherit;
    font-size: 18px;
    text-align: left;
    white-space: nowrap;
    color: #7c7c7c;
}
.sub {
    width: 14px;
    height: 14px;
    margin-left: auto;
    color: #888;
}

/* numbered marks over the list and the menu */
.callout {
    display: flex;
    align-items: center;
    justify-content: center;
    position: absolute;
    width: 46px;
    height: 46px;
    border-radius: 50%;
    background-color: #d74a2e;
    font-size: 24px;
    font-weight: normal;
    color: #fff;
}
.callout-one {
    left: 116px;
    top: -9px;
}
.callout-two {
    left: 261px;
    top: -2px;
}
.frame {
    position: absolute;
    left: 11px;
    top: -2px;
    width: 221px;
    height: 42px;
    border: 4px solid #d74a2e;
}
```
